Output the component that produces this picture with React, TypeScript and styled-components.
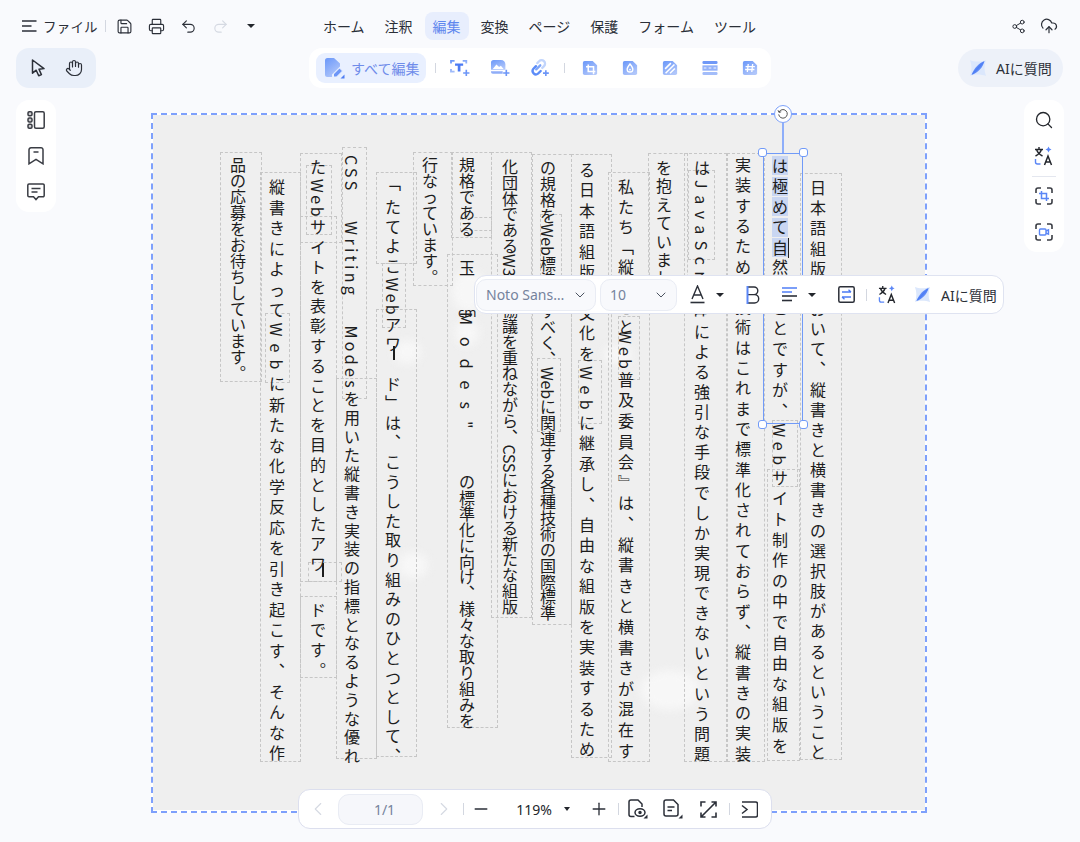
import React from "react";
import styled, { createGlobalStyle } from "styled-components";
import {
  Hand,
  Printer,
  Redo2,
  Save,
  Search,
  Share2,
  Undo2,
  ChevronDown,
  ChevronLeft,
  ChevronRight,
  Minus,
  Plus,
  CloudUpload,
} from "lucide-react";

const PAPER_X = 153;
const PAPER_Y = 115;

const GlobalStyle = createGlobalStyle`
  html, body {
    margin: 0;
    padding: 0;
    background: #f9fafd;
  }
  body {
    font-family: "Noto Sans", "Noto Sans CJK JP", sans-serif;
    color: #2b2f38;
  }
`;

interface RunData {
  x: number;
  y: number;
  ls: number;
  lat?: number;
  text: string;
  hl?: string;
}

// x = centre of the column, y = centre of the first glyph,
// ls = letter spacing, lat = letter spacing of the latin parts
const runs: RunData[] = [
  { x: 238, y: 165, ls: 0, text: "品の応募をお待ちしています。" },
  { x: 277, y: 187, ls: 4.5, lat: 7, text: "縦書きによってWebに新たな化学反応を引き起こす、そんな作" },
  { x: 318, y: 167, ls: 3.8, lat: 2.5, text: "たWebサイトを表彰することを目的としたアワ" },
  { x: 318, y: 610, ls: 4, text: "ドです。" },
  { x: 352, y: 163, ls: 2.8, lat: 3.3, text: "CSS\u00a0\u00a0\u00a0\u00a0Writing\u00a0\u00a0\u00a0\u00a0Modesを用いた縦書き実装の指標となるような優れ" },
  { x: 393, y: 183, ls: 0, text: "「" },
  { x: 393, y: 207, ls: 3.6, lat: 2.2, text: "たてよこWebアワ\u3000ド」は、こうした取り組みのひとつとして、" },
  { x: 430, y: 165, ls: 0, text: "行なっています。" },
  { x: 467, y: 165, ls: 0, text: "規格である" },
  { x: 467, y: 268, ls: 0, text: "玉" },
  { x: 467, y: 320, ls: 12, text: "Modes\"" },
  { x: 467, y: 482, ls: -0.1, text: "の標準化に向け、様々な取り組みを" },
  { x: 510, y: 167, ls: -0.2, text: "化団体であるW3Cと協議を重ねながら、CSSにおける新たな組版" },
  { x: 548, y: 168, ls: -0.15, text: "の規格をWeb標準にすべく、Webに関連する各種技術の国際標準" },
  { x: 587, y: 170, ls: 4.4, lat: 5.4, text: "る日本語組版の文化をWebに継承し、自由な組版を実装するため" },
  { x: 626, y: 187, ls: 4, text: "私たち「縦書きと" },
  { x: 626, y: 338, ls: 4.6, lat: 3, text: "Web普及委員会』は、縦書きと横書きが混在す" },
  { x: 664, y: 168, ls: 2.4, text: "を抱えていました。" },
  { x: 702, y: 168, ls: 4.1, lat: 6.5, text: "はJavaScriptによる強引な手段でしか実現できないという問題" },
  { x: 743, y: 165, ls: 4.3, text: "実装するための技術はこれまで標準化されておらず、縦書きの実装" },
  { x: 780, y: 164, ls: 4.6, lat: 4.5, hl: "は極めて自", text: "然なことですが、Webサイト制作の中で自由な組版を" },
  { x: 818, y: 188, ls: 4.15, text: "日本語組版において、縦書きと横書きの選択肢があるということ" },
];

// x, y, w, h of the dashed text frames
const frames: number[][] = [
  [220, 152, 42, 230], [260, 172, 41, 590], [265, 313, 25, 70], [300, 153, 42, 90], [306, 165, 26, 70],
  [300, 216, 37, 366], [308, 562, 34, 20], [300, 596, 37, 82], [342, 147, 25, 252], [336, 378, 41, 381],
  [376, 172, 41, 92], [382, 263, 24, 65], [376, 309, 41, 448], [413, 152, 40, 134], [451, 152, 41, 86],
  [460, 217, 32, 14], [447, 254, 51, 474], [491, 152, 41, 466], [532, 154, 40, 471],
  [540, 214, 22, 62], [537, 358, 24, 74], [571, 154, 41, 604], [578, 360, 24, 64], [608, 172, 42, 590],
  [618, 316, 22, 64], [648, 153, 40, 150], [684, 153, 43, 609], [688, 170, 27, 90], [727, 153, 38, 609],
  [767, 469, 33, 292], [772, 420, 26, 67], [800, 173, 42, 587],
];

const smudges: number[][] = [
  [452, 270, 34, 42], [455, 320, 24, 26], [393, 340, 28, 24], [398, 552, 30, 26], [640, 670, 60, 40], [603, 345, 30, 20],
];

const splitLatin = (text: string, ls: number) =>
  text.split(/([A-Za-z0-9"\u00a0]+)/).map((part, i) =>
    i % 2 === 1 ? <Latin key={i} $ls={ls}>{part}</Latin> : part
  );

const App = () => {
  return (
    <Root>
      <GlobalStyle />
      <GradientDefs />
      <TopBar>
        <FileGroup>
          <Slot $w={16}><MenuIcon /></Slot>
          <FileLabel>ファイル</FileLabel>
          <BarSep $ml={7} $h={12} />
          <Slot $w={18} $ml={10}><Save size={17} strokeWidth={1.6} /></Slot>
          <Slot $w={18} $ml={14}><Printer size={17} strokeWidth={1.6} /></Slot>
          <Slot $w={18} $ml={14}><Undo2 size={17} strokeWidth={1.6} /></Slot>
          <Slot $w={18} $ml={14} $muted><Redo2 size={17} strokeWidth={1.6} /></Slot>
          <Caret $ml={17} $size={4} />
        </FileGroup>
        <Tabs>
          <Tab>ホーム</Tab>
          <Tab>注釈</Tab>
          <Tab $active>編集</Tab>
          <Tab>変換</Tab>
          <Tab>ページ</Tab>
          <Tab>保護</Tab>
          <Tab>フォーム</Tab>
          <Tab>ツール</Tab>
        </Tabs>
        <ShareGroup>
          <Slot $w={18}><Share2 size={15} strokeWidth={1.6} /></Slot>
          <Slot $w={18}><CloudUpload size={18} strokeWidth={1.6} /></Slot>
        </ShareGroup>
      </TopBar>

      <ToolRow>
        <ModePill>
          <Slot $w={20}><PointerIcon /></Slot>
          <Slot $w={20}><Hand size={18} strokeWidth={1.6} /></Slot>
        </ModePill>
        <EditTools>
          <EditAllButton>
            <EditAllIcon />
            すべて編集
          </EditAllButton>
          <BarSep $ml={9} $mr={4} $h={10} />
          <ToolSlot><TextAddIcon /></ToolSlot>
          <ToolSlot><ImageAddIcon /></ToolSlot>
          <ToolSlot><LinkAddIcon /></ToolSlot>
          <BarSep $ml={4} $mr={5} $h={10} />
          <ToolSlot><CropDocIcon /></ToolSlot>
          <ToolSlot><WatermarkIcon /></ToolSlot>
          <ToolSlot><BackgroundIcon /></ToolSlot>
          <ToolSlot><HeaderFooterIcon /></ToolSlot>
          <ToolSlot><BatesIcon /></ToolSlot>
        </EditTools>
        <AskPill>
          <StarIcon size={18} />
          AIに質問
        </AskPill>
      </ToolRow>

      <Body>
        <LeftRail>
          <RailSlot><PanelsIcon /></RailSlot>
          <RailSlot><BookmarkIcon /></RailSlot>
          <RailSlot><CommentIcon /></RailSlot>
        </LeftRail>

        <Page>
          <Paper>
            {smudges.map(([x, y, w, h], i) => (
              <Smudge key={i} $x={x - PAPER_X} $y={y - PAPER_Y} $w={w} $h={h} />
            ))}
            {frames.map(([x, y, w, h], i) => (
              <Frame key={i} $x={x - PAPER_X} $y={y - PAPER_Y} $w={w} $h={h} />
            ))}
            {runs.map((r, i) => (
              <Run key={i} $x={r.x - 8 - PAPER_X} $y={r.y - 8 - PAPER_Y} $ls={r.ls}>
                {r.hl && r.hl.split("").map((c, j) => <Marked key={j}>{c}</Marked>)}
                {splitLatin(r.text, r.lat ?? r.ls)}
              </Run>
            ))}
            <LongMark $x={322 - PAPER_X} $y={563 - PAPER_Y} />
            <LongMark $x={393 - PAPER_X} $y={346 - PAPER_Y} />
            <StrayUnit $x={458 - PAPER_X} $y={304 - PAPER_Y}>cm</StrayUnit>
            <TextCaret />
            <Selection>
              <RotateStem />
              <RotateKnob>
                <svg width="12" height="12" viewBox="0 0 12 12" fill="none" stroke="#555" strokeWidth="1">
                  <path d="M2 4.2A4.3 4.3 0 1 1 1.7 6.4" />
                  <path d="M1 2.2l1 2.2 2.2-.6" />
                </svg>
              </RotateKnob>
              <Grip $h="left" $v="top" />
              <Grip $h="right" $v="top" />
              <Grip $h="left" $v="bottom" />
              <Grip $h="right" $v="bottom" />
            </Selection>
          </Paper>
        </Page>

        <RightRail>
          <RailSlot><Search size={20} strokeWidth={1.6} color="#23262c" /></RailSlot>
          <RailSlot><TranslateIcon /></RailSlot>
          <RailRule />
          <RailSlot><FrameCropIcon /></RailSlot>
          <RailSlot><FrameRecordIcon /></RailSlot>
        </RightRail>
      </Body>

      <FloatBar>
        <FontSelect>
          <SelectText>Noto Sans…</SelectText>
          <ChevronDown size={16} strokeWidth={1.5} color="#4b5360" />
        </FontSelect>
        <SizeSelect>
          <SelectText>10</SelectText>
          <ChevronDown size={16} strokeWidth={1.5} color="#4b5360" />
        </SizeSelect>
        <Slot $w={24} $ml={8}><FontColorIcon /></Slot>
        <Caret $ml={7} $size={4} />
        <Slot $w={24} $ml={17}><BoldIcon /></Slot>
        <Slot $w={24} $ml={13}><AlignIcon /></Slot>
        <Caret $ml={6} $size={4} />
        <Slot $w={24} $ml={18}><SwapBoxIcon /></Slot>
        <BarSep $ml={8} $h={12} />
        <Slot $w={24} $ml={8}><TranslateIcon small /></Slot>
        <Slot $w={24} $ml={11}><StarIcon size={17} /></Slot>
        <FloatLabel>AIに質問</FloatLabel>
      </FloatBar>

      <BottomBar>
        <Slot $w={24} $ml={7} $muted><ChevronLeft size={22} strokeWidth={1.2} /></Slot>
        <PageInput>1/1</PageInput>
        <Slot $w={24} $ml={9} $muted><ChevronRight size={22} strokeWidth={1.2} /></Slot>
        <BarSep $ml={7} $h={12} />
        <Slot $w={24} $ml={5}><Minus size={20} strokeWidth={1.6} /></Slot>
        <ZoomValue>119%</ZoomValue>
        <Caret $size={3.5} />
        <Slot $w={24} $ml={17}><Plus size={20} strokeWidth={1.6} /></Slot>
        <BarSep $ml={7} $h={12} />
        <Slot $w={24} $ml={7}><ViewDocIcon /></Slot>
        <Slot $w={24} $ml={11}><NoteDocIcon /></Slot>
        <Slot $w={24} $ml={11}><ExpandIcon /></Slot>
        <BarSep $ml={9} $h={12} />
        <Slot $w={24} $ml={7}><CollapseIcon /></Slot>
      </BottomBar>
    </Root>
  );
};

/* ---------- icons ---------- */

const GradientDefs = () => (
  <svg width="0" height="0" style={{ position: "absolute" }}>
    <defs>
      <linearGradient id="blueFill" x1="0" y1="0" x2="0.6" y2="1">
        <stop offset="0" stopColor="#6a97f9" />
        <stop offset="1" stopColor="#b0c6fa" />
      </linearGradient>
      <linearGradient id="blueSoft" x1="0" y1="0" x2="1" y2="1">
        <stop offset="0" stopColor="#c6d8fc" />
        <stop offset="0.5" stopColor="#4d7df5" />
        <stop offset="1" stopColor="#bcd2fb" />
      </linearGradient>
    </defs>
  </svg>
);

const MenuIcon = () => (
  <svg width="15" height="12" viewBox="0 0 15 12" fill="none" stroke="#2b2f38" strokeWidth="1.5">
    <path d="M0 1h14.5M0 6h9.5M0 11h14.5" />
  </svg>
);

const PointerIcon = () => (
  <svg width="15" height="18" viewBox="0 0 15 18" fill="none" stroke="#2b2f38" strokeWidth="1.5" strokeLinejoin="round">
    <path d="M1.500 1v13.200l3.700-3 2.500 5.600 2.700-1.200-2.400-5.400 5-.6z" />
  </svg>
);

const EditAllIcon = () => (
  <svg width="22" height="22" viewBox="0 0 22 22">
    <path d="M2 3.5A2.5 2.5 0 0 1 4.5 1H11l6 5.5v3L9 17.5V20H4.5A2.5 2.5 0 0 1 2 17.5z" fill="url(#blueFill)" />
    <path d="M10.5 20v-3L16.5 11l3 3-6 6z" fill="#6d96f7" stroke="#e9f0ff" strokeWidth="1" />
    <path d="M21.5 17.5v4h-4z" fill="#4f7ef4" />
  </svg>
);

const TextAddIcon = () => (
  <svg width="20" height="18" viewBox="0 0 22 20" fill="none">
    <path d="M1 5V2h4M14 2h4v3M1 11v3h4" stroke="url(#blueFill)" strokeWidth="2" />
    <path d="M5.5 5h9v2.500h-3V14H8.500V7.500h-3z" fill="#4c7bf3" />
    <path d="M18 12v7M14.500 15.500h7" stroke="#6d96f7" strokeWidth="1.800" />
  </svg>
);

const ImageAddIcon = () => (
  <svg width="20" height="18" viewBox="0 0 22 20" fill="none">
    <path d="M1 4a3 3 0 0 1 3-3h8c3 0 5 2 5 5v6H1z" fill="url(#blueFill)" />
    <path d="M3 11l4-5 3 3 2-1.500 3 3.500z" fill="#fff" />
    <path d="M1 13.500h13v3H3a2 2 0 0 1-2-2z" fill="#8fadf8" />
    <path d="M18 12v7M14.500 15.500h7" stroke="#6d96f7" strokeWidth="1.800" />
  </svg>
);

const LinkAddIcon = () => (
  <svg width="20" height="18" viewBox="0 0 22 20" fill="none" strokeWidth="2.600" strokeLinecap="round">
    <path d="M8 4.500l2-2a3.800 3.800 0 0 1 5.500 5.400l-2 2" stroke="#c2d5fc" />
    <path d="M6.500 8l-3 3a3.800 3.800 0 0 0 5.300 5.300l3-3" stroke="#5c8cf8" />
    <path d="M6.800 11.500l4.500-4.500" stroke="#7ea5f9" />
    <path d="M17.500 12.500v6.500M14.300 15.700h6.500" stroke="#6d96f7" strokeWidth="1.800" strokeLinecap="butt" />
  </svg>
);

const DocShape = ({ children }: { children?: React.ReactNode }) => (
  <svg width="16" height="16" viewBox="0 0 18 18" fill="none">
    <path d="M1 3a2 2 0 0 1 2-2h9l5 5v9a2 2 0 0 1-2 2H3a2 2 0 0 1-2-2z" fill="url(#blueFill)" />
    {children}
  </svg>
);

const CropDocIcon = () => (
  <DocShape>
    <path d="M7 5v8h8M4.500 7.500H13V16" stroke="#fff" strokeWidth="1.700" />
  </DocShape>
);

const WatermarkIcon = () => (
  <DocShape>
    <path d="M9 4.500c2 2.500 3.200 4 3.200 5.800a3.200 3.200 0 0 1-6.400 0C5.800 8.500 7 7 9 4.500z" stroke="#fff" strokeWidth="1.500" />
    <circle cx="9" cy="10.800" r="1" fill="#fff" />
  </DocShape>
);

const BackgroundIcon = () => (
  <DocShape>
    <path d="M3.500 10l6.500-6.500M4 15l10-10M9 15l5.500-5.500" stroke="#fff" strokeWidth="1.700" />
  </DocShape>
);

const HeaderFooterIcon = () => (
  <svg width="16" height="16" viewBox="0 0 18 18">
    <rect x="0.500" y="1" width="17" height="3.500" rx="1.500" fill="#6f98f7" />
    <rect x="0.500" y="6" width="17" height="6" fill="#94b2f9" />
    <path d="M2 9h3M7.500 9h3M13 9h3" stroke="#fff" strokeWidth="1" />
    <rect x="0.500" y="13.500" width="17" height="3.500" rx="1.500" fill="#a3bdfa" />
  </svg>
);

const BatesIcon = () => (
  <DocShape>
    <path d="M7 4.500L6 13.500M12 4.500l-1 9M4 7.500h10.500M3.500 10.700H14" stroke="#fff" strokeWidth="1.500" />
  </DocShape>
);

const StarIcon = ({ size }: { size: number }) => (
  <svg width={size} height={size} viewBox="0 0 18 18">
    <path d="M1 1c4 2 11 2 16 0-2 5-2 11 0 16-5-2-12-2-16 0 2-5 2-11 0-16z" fill="#dbe7fc" />
    <path d="M15.500 2C10 4 5 9 2.500 16 9 13.500 14 8.500 15.500 2z" fill="url(#blueSoft)" />
  </svg>
);

const PanelsIcon = () => (
  <svg width="18" height="18" viewBox="0 0 18 18" fill="none" stroke="#3a3d44" strokeWidth="1.500">
    <rect x="7.500" y="0.800" width="9.700" height="16.400" rx="1.500" />
    <rect x="1" y="0.800" width="4" height="4" rx="1.200" fill="#3a3d44" fillOpacity=".25" />
    <rect x="1" y="7" width="4" height="4" rx="1.200" fill="#3a3d44" fillOpacity=".25" />
    <rect x="1" y="13.200" width="4" height="4" rx="1.200" fill="#3a3d44" fillOpacity=".25" />
  </svg>
);

const BookmarkIcon = () => (
  <svg width="16" height="18" viewBox="0 0 16 18" fill="none" stroke="#3a3d44" strokeWidth="1.500">
    <path d="M3 .8h10a2 2 0 0 1 2 2v14l-7-4.500-7 4.500v-14a2 2 0 0 1 2-2z" />
    <path d="M5.500 5h5" />
  </svg>
);

const CommentIcon = () => (
  <svg width="18" height="18" viewBox="0 0 18 18" fill="none" stroke="#3a3d44" strokeWidth="1.500">
    <path d="M2 1h14a1.200 1.200 0 0 1 1.200 1.200v10.300a1.200 1.200 0 0 1-1.200 1.200h-4.500L9 16.500l-2.500-2.800H2A1.200 1.200 0 0 1 .8 12.500V2.200A1.200 1.200 0 0 1 2 1z" />
    <path d="M4.500 5.500h9M4.500 9h6" />
  </svg>
);

const TranslateIcon = ({ small }: { small?: boolean }) => (
  <svg width={small ? 19 : 20} height={small ? 19 : 20} viewBox="0 0 20 20" fill="none">
    <path d="M1 3.500h8M5 1v2.500M2.500 3.500c1 3 3 5 6 6.500M7.500 3.500C6.500 6.500 4.500 8.500 1.500 10" stroke="#23262c" strokeWidth="1.400" />
    <path d="M14.500 0.500l1 2 2 1-2 1-1 2-1-2-2-1 2-1z" fill="#5a86f6" />
    <path d="M1.500 13v3a2 2 0 0 0 2 2h3" stroke="#5a86f6" strokeWidth="1.400" />
    <path d="M10.500 19l3.500-9 3.500 9M11.800 16h4.500" stroke="#23262c" strokeWidth="1.500" />
  </svg>
);

const FrameCorners = () => (
  <path d="M1 6V3a2 2 0 0 1 2-2h3M12 1h3a2 2 0 0 1 2 2v3M17 12v3a2 2 0 0 1-2 2h-3M6 17H3a2 2 0 0 1-2-2v-3" stroke="#3a3d44" strokeWidth="1.600" />
);

const FrameCropIcon = () => (
  <svg width="18" height="18" viewBox="0 0 18 18" fill="none">
    <FrameCorners />
    <path d="M6.500 4v7.500H14M4 6.500h7.500V14" stroke="#5a86f6" strokeWidth="1.500" />
  </svg>
);

const FrameRecordIcon = () => (
  <svg width="18" height="18" viewBox="0 0 18 18" fill="none">
    <FrameCorners />
    <rect x="4.500" y="6" width="6.500" height="6" rx="1" stroke="#5a86f6" strokeWidth="1.400" />
    <path d="M11 8l2.500-1.200v4.400L11 10" stroke="#5a86f6" strokeWidth="1.400" />
  </svg>
);

const FontColorIcon = () => (
  <svg width="15" height="19" viewBox="0 0 15 19" fill="none" stroke="#2b2f38" strokeWidth="1.400">
    <path d="M2 14L7.500 1 13 14M3.700 10h7.600" />
    <path d="M.5 17.500h14" strokeWidth="1.600" />
  </svg>
);

const BoldIcon = () => (
  <svg width="14" height="18" viewBox="0 0 14 18" fill="none">
    <path d="M2 1h6a3.800 3.800 0 0 1 0 7.600H2M8 8.600h.5a4.200 4.200 0 0 1 0 8.400H2" stroke="#2b2f38" strokeWidth="1.400" />
    <path d="M1.500 0v18" stroke="#5a86f6" strokeWidth="2" />
  </svg>
);

const AlignIcon = () => (
  <svg width="16" height="15" viewBox="0 0 16 15" fill="none" strokeWidth="1.600">
    <path d="M0 1h15" stroke="#5a86f6" />
    <path d="M0 5h10" stroke="#5a86f6" />
    <path d="M0 9h15" stroke="#2b2f38" />
    <path d="M0 13.500h10" stroke="#2b2f38" />
  </svg>
);

const SwapBoxIcon = () => (
  <svg width="17" height="17" viewBox="0 0 17 17" fill="none">
    <rect x="0.800" y="0.800" width="15.400" height="15.400" rx="1.500" stroke="#2b2f38" strokeWidth="1.500" />
    <path d="M4 6h9M10.500 3.700L13 6M13 11H4M6.500 13.300L4 11" stroke="#4c7bf3" strokeWidth="1.300" />
  </svg>
);

const ViewDocIcon = () => (
  <svg width="20" height="20" viewBox="0 0 20 20" fill="none" stroke="#2b2f38" strokeWidth="1.500">
    <path d="M6.500 17.500H3a2 2 0 0 1-2-2V3a2 2 0 0 1 2-2h7l4 4v3" />
    <ellipse cx="12" cy="13.500" rx="5" ry="3.700" />
    <circle cx="12" cy="13.500" r="1" fill="#2b2f38" />
    <path d="M19.500 15.500v4h-4z" fill="#2b2f38" stroke="none" />
  </svg>
);

const NoteDocIcon = () => (
  <svg width="20" height="20" viewBox="0 0 20 20" fill="none" stroke="#2b2f38" strokeWidth="1.500">
    <path d="M3 1h7.500L15 5.500V15a2 2 0 0 1-2 2H3a2 2 0 0 1-2-2V3a2 2 0 0 1 2-2z" />
    <path d="M4.500 8h7M4.500 11.500h4.500" />
    <path d="M19.500 15.500v4h-4z" fill="#2b2f38" stroke="none" />
  </svg>
);

const ExpandIcon = () => (
  <svg width="17" height="17" viewBox="0 0 17 17" fill="none" stroke="#2b2f38" strokeWidth="1.600">
    <path d="M1 5.500V1h4.500M11.500 1H16v4.500M16 11.500V16h-4.500M5.500 16H1v-4.500M1.500 15.500l14-14" />
  </svg>
);

const CollapseIcon = () => (
  <svg width="17" height="17" viewBox="0 0 17 17" fill="none" stroke="#2b2f38" strokeWidth="1.500">
    <path d="M1 1h13.500a2 2 0 0 1 2 2v11a2 2 0 0 1-2 2H1" />
    <path d="M1 4.500l5 4-5 4" />
  </svg>
);

/* ---------- shell ---------- */

const Root = styled.div`
  position: relative;
  width: 1080px;
  height: 842px;
  overflow: hidden;
  background: #f9fafd;
  display: flex;
  flex-direction: column;
  font-family: "Noto Sans", "Noto Sans CJK JP", sans-serif;
`;

const TopBar = styled.div`
  display: flex;
  align-items: center;
  height: 28px;
  padding: 12px 22px 8px 21px;
`;

const FileGroup = styled.div`
  display: flex;
  align-items: center;
  width: 294px;
`;

const FileLabel = styled.span`
  margin-left: 6px;
  font-size: 13.5px;
  letter-spacing: 0.2px;
  color: #2b2f38;
`;

const Tabs = styled.div`
  display: flex;
  gap: 4px;
`;

const Tab = styled.div<{ $active?: boolean }>`
  height: 28px;
  padding: 0 8px;
  border-radius: 8px;
  display: flex;
  align-items: center;
  font-size: 14px;
  color: ${(p) => (p.$active ? "#5f87ee" : "#2b2f38")};
  background: ${(p) => (p.$active ? "#e8eefd" : "transparent")};
`;

const ShareGroup = styled.div`
  margin-left: auto;
  display: flex;
  align-items: center;
  gap: 13px;
`;

const Slot = styled.div<{ $w: number; $ml?: number; $muted?: boolean }>`
  flex: none;
  width: ${(p) => p.$w}px;
  margin-left: ${(p) => p.$ml ?? 0}px;
  display: flex;
  align-items: center;
  justify-content: center;
  color: ${(p) => (p.$muted ? "#d5d9e2" : "#2b2f38")};
`;

const BarSep = styled.div<{ $ml?: number; $mr?: number; $h: number }>`
  flex: none;
  width: 1px;
  height: ${(p) => p.$h}px;
  margin-left: ${(p) => p.$ml ?? 0}px;
  margin-right: ${(p) => p.$mr ?? 0}px;
  background: #d3d7e0;
`;

const Caret = styled.div<{ $ml?: number; $size: number }>`
  flex: none;
  width: 0;
  height: 0;
  margin-left: ${(p) => p.$ml ?? 0}px;
  border-left: ${(p) => p.$size}px solid transparent;
  border-right: ${(p) => p.$size}px solid transparent;
  border-top: ${(p) => p.$size * 1.2}px solid #23262c;
`;

const ToolRow = styled.div`
  display: flex;
  align-items: center;
  height: 40px;
  padding: 0 17px 0 16px;
`;

const ModePill = styled.div`
  width: 80px;
  height: 40px;
  border-radius: 13px;
  background: #e9eff9;
  display: flex;
  align-items: center;
  justify-content: center;
  gap: 16px;
`;

const EditTools = styled.div`
  margin-left: 213px;
  width: 462px;
  height: 40px;
  box-sizing: border-box;
  padding-left: 7px;
  border-radius: 13px;
  background: #fff;
  display: flex;
  align-items: center;
`;

const EditAllButton = styled.div`
  flex: none;
  width: 110px;
  height: 30px;
  box-sizing: border-box;
  padding-left: 7px;
  border-radius: 9px;
  background: #e9f0ff;
  display: flex;
  align-items: center;
  gap: 6px;
  font-size: 14px;
  color: #6f8cea;
`;

const ToolSlot = styled.div`
  flex: none;
  width: 40px;
  display: flex;
  align-items: center;
  justify-content: center;
`;

const AskPill = styled.div`
  margin-left: auto;
  width: 105px;
  height: 38px;
  box-sizing: border-box;
  padding-left: 11px;
  border-radius: 19px;
  background: #edf1f9;
  display: flex;
  align-items: center;
  gap: 9px;
  font-size: 14px;
  color: #2b2f38;
`;

const Body = styled.div`
  display: flex;
  align-items: flex-start;
  padding: 12px 16px 0;
`;

const LeftRail = styled.div`
  flex: none;
  width: 40px;
  height: 112px;
  padding-top: 2px;
  box-sizing: border-box;
  border-radius: 13px;
  background: #fff;
  display: flex;
  flex-direction: column;
`;

const RightRail = styled(LeftRail)`
  height: 152px;
  margin-left: auto;
`;

const RailSlot = styled.div`
  height: 36px;
  display: flex;
  align-items: center;
  justify-content: center;
`;

const RailRule = styled.div`
  height: 1px;
  margin: 2px 8px 1px;
  background: #e4e7ef;
`;

/* ---------- page ---------- */

const Page = styled.div`
  flex: none;
  width: 776px;
  height: 700px;
  margin: 13px 0 0 95px;
  box-sizing: border-box;
  border: 2px dashed #7ea0fc;
  padding-bottom: 1px;
  background: #fff;
  display: flex;
`;

const Paper = styled.div`
  position: relative;
  flex: 1;
  background: #efefef;
`;

const Smudge = styled.div<{ $x: number; $y: number; $w: number; $h: number }>`
  position: absolute;
  left: ${(p) => p.$x}px;
  top: ${(p) => p.$y}px;
  width: ${(p) => p.$w}px;
  height: ${(p) => p.$h}px;
  background: #f7f7f7;
  border-radius: 50%;
  filter: blur(5px);
`;

const Frame = styled.div<{ $x: number; $y: number; $w: number; $h: number }>`
  position: absolute;
  left: ${(p) => p.$x}px;
  top: ${(p) => p.$y}px;
  width: ${(p) => p.$w}px;
  height: ${(p) => p.$h}px;
  box-sizing: border-box;
  border: 1px dashed #c6c6c6;
`;

const Run = styled.div<{ $x: number; $y: number; $ls: number }>`
  position: absolute;
  left: ${(p) => p.$x}px;
  top: ${(p) => p.$y}px;
  width: 16px;
  writing-mode: vertical-rl;
  white-space: nowrap;
  font-family: "Noto Sans CJK JP", "Noto Sans", sans-serif;
  font-size: 16px;
  line-height: 16px;
  letter-spacing: ${(p) => p.$ls}px;
  font-feature-settings: "vert" 0, "vrt2" 0;
  text-spacing-trim: space-all;
  color: #1d1d1d;
`;

const Latin = styled.span<{ $ls: number }>`
  letter-spacing: ${(p) => p.$ls}px;
`;

const Marked = styled.span`
  display: inline-block;
  width: 16px;
  height: 19px;
  margin-bottom: 1.5px;
  letter-spacing: 0;
  text-align: center;
  background: #c9d6f2;
`;

const LongMark = styled.span<{ $x: number; $y: number }>`
  position: absolute;
  left: ${(p) => p.$x}px;
  top: ${(p) => p.$y}px;
  width: 1.5px;
  height: 14px;
  background: #1d1d1d;
`;

const StrayUnit = styled.span<{ $x: number; $y: number }>`
  position: absolute;
  left: ${(p) => p.$x}px;
  top: ${(p) => p.$y}px;
  font-size: 13px;
  line-height: 16px;
  color: #1d1d1d;
`;

const TextCaret = styled.div`
  position: absolute;
  left: ${788 - PAPER_X}px;
  top: ${238 - PAPER_Y}px;
  width: 1px;
  height: 20px;
  background: #222;
`;

const Selection = styled.div`
  position: absolute;
  left: ${763 - PAPER_X}px;
  top: ${153 - PAPER_Y}px;
  width: 40px;
  height: 271px;
  box-sizing: border-box;
  border: 1.5px solid #709af8;
`;

const RotateStem = styled.div`
  position: absolute;
  left: 18px;
  top: -31px;
  width: 1.5px;
  height: 30px;
  background: #8eaefa;
`;

const RotateKnob = styled.div`
  position: absolute;
  left: 10px;
  top: -49px;
  width: 18px;
  height: 18px;
  box-sizing: border-box;
  border-radius: 50%;
  border: 1.5px solid #7ea2fa;
  background: #fff;
  display: flex;
  align-items: center;
  justify-content: center;
`;

const Grip = styled.div<{ $h: "left" | "right"; $v: "top" | "bottom" }>`
  position: absolute;
  ${(p) => p.$h}: -6px;
  ${(p) => p.$v}: -6px;
  width: 9px;
  height: 9px;
  box-sizing: border-box;
  border-radius: 3px;
  border: 1px solid #709af8;
  background: #fff;
`;

/* ---------- floating bars ---------- */

const FloatBar = styled.div`
  position: absolute;
  left: 474px;
  top: 275px;
  width: 530px;
  height: 39px;
  box-sizing: border-box;
  padding-left: 1px;
  border: 1px solid #dfe3f1;
  border-radius: 12px;
  background: #fff;
  display: flex;
  align-items: center;
`;

const FontSelect = styled.div`
  flex: none;
  width: 120px;
  height: 32px;
  box-sizing: border-box;
  padding: 0 7px 0 9px;
  border: 1px solid #e9ecf4;
  border-radius: 10px;
  background: #f8f9fc;
  display: flex;
  align-items: center;
  justify-content: space-between;
`;

const SizeSelect = styled(FontSelect)`
  width: 77px;
  margin-left: 4px;
`;

const SelectText = styled.span`
  font-size: 14px;
  color: #75839c;
`;

const FloatLabel = styled.span`
  margin-left: 7px;
  font-size: 14px;
  color: #2b2f38;
`;

const BottomBar = styled.div`
  position: absolute;
  left: 298px;
  top: 789px;
  width: 474px;
  height: 40px;
  box-sizing: border-box;
  border: 1px solid #dcdfee;
  border-radius: 12px;
  background: #fff;
  display: flex;
  align-items: center;
`;

const PageInput = styled.div`
  flex: none;
  width: 85px;
  height: 31px;
  margin-left: 8px;
  padding-left: 8px;
  box-sizing: border-box;
  border: 1px solid #e9ecf4;
  border-radius: 11px;
  background: #f6f7fb;
  display: flex;
  align-items: center;
  justify-content: center;
  font-size: 14px;
  color: #75839c;
`;

const ZoomValue = styled.div`
  flex: none;
  width: 60px;
  margin-left: 11px;
  text-align: center;
  font-size: 14px;
  color: #23262c;
`;

export default App;
